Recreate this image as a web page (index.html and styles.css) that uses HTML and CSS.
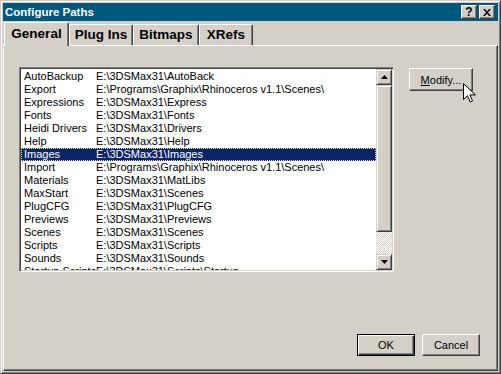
FILE: index.html
```html
<!DOCTYPE html>
<html lang="en">
<head>
	<meta charset="UTF-8">
	<title>Configure Paths</title>
	<link rel="stylesheet" href="styles.css">
</head>
<body>
	<div class="window">
		<div class="titlebar">
			<span class="title">Configure Paths</span>
			<span class="tbtn help">?</span>
			<span class="tbtn close">
				<svg width="8" height="7" viewBox="0 0 8 7"><path d="M0 0h2l2 2.5 2-2.5h2l-3 3.5 3 3.5h-2l-2-2.5-2 2.5h-2l3-3.5z" fill="#000"/></svg>
			</span>
		</div>
		<div class="tabs">
			<div class="tab current t-general">General</div>
			<div class="tab t-plug">Plug Ins</div>
			<div class="tab t-bitmaps">Bitmaps</div>
			<div class="tab t-xrefs">XRefs</div>
		</div>
		<div class="panel">
			<div class="toprow">
				<div class="listbox">
					<ul class="rows">
						<li><span class="name">AutoBackup</span><span>E:\3DSMax31\AutoBack</span></li>
						<li><span class="name">Export</span><span>E:\Programs\Graphix\Rhinoceros v1.1\Scenes\</span></li>
						<li><span class="name">Expressions</span><span>E:\3DSMax31\Express</span></li>
						<li><span class="name">Fonts</span><span>E:\3DSMax31\Fonts</span></li>
						<li><span class="name">Heidi Drivers</span><span>E:\3DSMax31\Drivers</span></li>
						<li><span class="name">Help</span><span>E:\3DSMax31\Help</span></li>
						<li class="selected"><span class="name">Images</span><span>E:\3DSMax31\Images</span></li>
						<li><span class="name">Import</span><span>E:\Programs\Graphix\Rhinoceros v1.1\Scenes\</span></li>
						<li><span class="name">Materials</span><span>E:\3DSMax31\MatLibs</span></li>
						<li><span class="name">MaxStart</span><span>E:\3DSMax31\Scenes</span></li>
						<li><span class="name">PlugCFG</span><span>E:\3DSMax31\PlugCFG</span></li>
						<li><span class="name">Previews</span><span>E:\3DSMax31\Previews</span></li>
						<li><span class="name">Scenes</span><span>E:\3DSMax31\Scenes</span></li>
						<li><span class="name">Scripts</span><span>E:\3DSMax31\Scripts</span></li>
						<li><span class="name">Sounds</span><span>E:\3DSMax31\Sounds</span></li>
						<li><span class="name">Startup Scripts</span><span>E:\3DSMax31\Scripts\Startup</span></li>
					</ul>
					<div class="scrollbar">
						<div class="sbtn"><svg width="7" height="4" viewBox="0 0 7 4"><path d="M3.5 0L7 4H0z" fill="#000"/></svg></div>
						<div class="thumb"></div>
						<div class="track"></div>
						<div class="sbtn"><svg width="7" height="4" viewBox="0 0 7 4"><path d="M0 0h7L3.5 4z" fill="#000"/></svg></div>
					</div>
				</div>
				<div class="button modify"><u>M</u>odify...</div>
			</div>
			<div class="bottomrow">
				<div class="button ok">OK</div>
				<div class="button">Cancel</div>
			</div>
		</div>
		<svg class="cursor" width="13" height="21" viewBox="0 0 13 21"><path d="M0.5 0.5v16l4-3.8 2.7 6.3 2.3-1-2.6-6.1h5.6z" fill="#fff" stroke="#000" stroke-width="1"/></svg>
	</div>
</body>
</html>
```

FILE: styles.css
```css
*{
	margin: 0;
	padding: 0;
	box-sizing: border-box;
}
body{
	background: #d4d0c8;
	font-family: "Liberation Sans", Arial, sans-serif;
	font-size: 11px;
	color: #000;
}
ul li{
	list-style: none;
}
.window{
	position: relative;
	width: 501px;
	height: 374px;
	background: #d4d0c8;
	border: 1px solid;
	border-color: #d4d0c8 #404040 #404040 #d4d0c8;
	box-shadow: inset 1px 1px #fff, inset -1px -1px #808080;
	padding: 2px;
	display: flex;
	flex-direction: column;
}
.titlebar{
	height: 18px;
	background: #00587f;
	display: flex;
	align-items: center;
	padding: 0 3px 0 2px;
	margin-bottom: 1px;
}
.title{
	flex: 1;
	color: #fff;
	font-weight: bold;
	font-size: 11.5px;
}
.tbtn{
	width: 16px;
	height: 14px;
	background: #d4d0c8;
	border: 1px solid;
	border-color: #fff #404040 #404040 #fff;
	box-shadow: inset -1px -1px #808080;
	display: flex;
	align-items: center;
	justify-content: center;
	font-weight: bold;
	font-size: 12px;
	line-height: 12px;
}
.help{
	margin-right: 2px;
}
.tabs{
	height: 23px;
	display: flex;
	align-items: flex-end;
	padding-left: 1px;
}
.tab{
	height: 21px;
	border: 1px solid;
	border-bottom: none;
	border-color: #fff #404040 #404040 #fff;
	box-shadow: inset -1px 0 #808080;
	border-radius: 2px 2px 0 0;
	font-weight: bold;
	font-size: 13.5px;
	text-align: center;
	line-height: 19px;
}
.tab.current{
	height: 24px;
	margin-bottom: -1px;
	position: relative;
	z-index: 1;
	background: #d4d0c8;
	line-height: 21px;
}
.t-general{ width: 65px; }
.t-plug{ width: 64px; }
.t-bitmaps{ width: 66px; }
.t-xrefs{ width: 54px; }
.panel{
	flex: 1;
	border: 1px solid;
	border-color: #fff #404040 #404040 #fff;
	box-shadow: inset -1px -1px #808080;
	padding: 21px 17px 14px 15px;
	display: flex;
	flex-direction: column;
}
.toprow{
	display: flex;
	align-items: flex-start;
}
.listbox{
	width: 375px;
	height: 205px;
	background: #fff;
	border: 1px solid;
	border-color: #808080 #fff #fff #808080;
	box-shadow: inset 1px 1px #404040, inset -1px -1px #d4d0c8;
	padding: 1px;
	display: flex;
}
.rows{
	flex: 1;
	overflow: hidden;
	padding-top: 1px;
	white-space: nowrap;
}
.rows li{
	height: 13px;
	line-height: 13px;
	display: flex;
}
.rows .name{
	width: 75px;
	flex-shrink: 0;
	padding-left: 3px;
	overflow: hidden;
}
.rows li.selected{
	background: #0a246a;
	color: #fff;
	outline: 1px dotted #f5e28a;
	outline-offset: -1px;
}
.scrollbar{
	width: 16px;
	display: flex;
	flex-direction: column;
}
.sbtn, .thumb{
	background: #d4d0c8;
	border: 1px solid;
	border-color: #d4d0c8 #404040 #404040 #d4d0c8;
	box-shadow: inset 1px 1px #fff, inset -1px -1px #808080;
}
.sbtn{
	height: 16px;
	display: flex;
	align-items: center;
	justify-content: center;
}
.thumb{
	height: 147px;
}
.track{
	flex: 1;
	background: repeating-conic-gradient(#fff 0 25%, #d4d0c8 0 50%) 0 0 / 2px 2px;
}
.button{
	background: #d4d0c8;
	border: 1px solid;
	border-color: #fff #404040 #404040 #fff;
	box-shadow: inset -1px -1px #808080;
	display: flex;
	align-items: center;
	justify-content: center;
	width: 58px;
	height: 22px;
}
.modify{
	width: 64px;
	height: 23px;
	margin: 1px 0 0 15px;
}
.modify u{
	text-decoration: underline;
}
.bottomrow{
	margin-top: auto;
	display: flex;
	justify-content: flex-end;
	gap: 7px;
}
.button.ok{
	border: 1px solid #000;
	box-shadow: inset 1px 1px #fff, inset -1px -1px #404040, inset -2px -2px #808080;
}
.cursor{
	position: absolute;
	left: 462px;
	top: 82px;
}
```
